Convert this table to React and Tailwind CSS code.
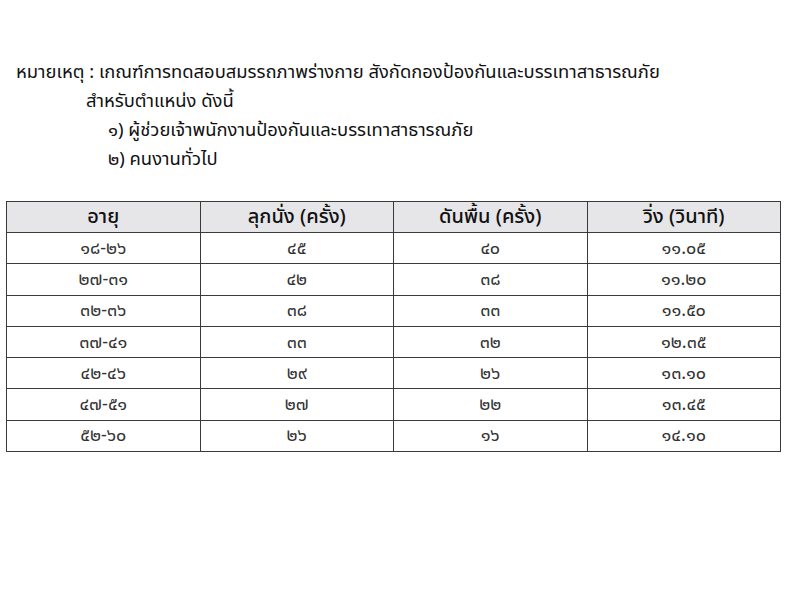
const rows = [
  ["๑๘-๒๖", "๔๕", "๔๐", "๑๑.๐๕"],
  ["๒๗-๓๑", "๔๒", "๓๘", "๑๑.๒๐"],
  ["๓๒-๓๖", "๓๘", "๓๓", "๑๑.๕๐"],
  ["๓๗-๔๑", "๓๓", "๓๒", "๑๒.๓๕"],
  ["๔๒-๔๖", "๒๙", "๒๖", "๑๓.๑๐"],
  ["๔๗-๕๑", "๒๗", "๒๒", "๑๓.๔๕"],
  ["๕๒-๖๐", "๒๖", "๑๖", "๑๔.๑๐"],
];

const headers = ["อายุ", "ลุกนั่ง (ครั้ง)", "ดันพื้น (ครั้ง)", "วิ่ง (วินาที)"];

export default function App() {
  return (
    <div
      className="w-[800px] h-[607px] bg-white text-[#111] overflow-hidden"
      style={{ fontFamily: '"Noto Sans Thai", "Noto Sans", "DejaVu Sans", sans-serif' }}
    >
      <div className="pt-[58px] pl-[16px] text-[18.4px] leading-[29px]">
        <p>หมายเหตุ : เกณฑ์การทดสอบสมรรถภาพร่างกาย สังกัดกองป้องกันและบรรเทาสาธารณภัย</p>
        <p className="pl-[70px]">สำหรับตำแหน่ง ดังนี้</p>
        <p className="pl-[92px]">๑) ผู้ช่วยเจ้าพนักงานป้องกันและบรรเทาสาธารณภัย</p>
        <p className="pl-[92px]">๒) คนงานทั่วไป</p>
      </div>

      <table className="ml-[6px] mt-[27px] w-[775px] border-collapse table-fixed">
        <thead>
          <tr className="bg-[#e6e6e9]">
            {headers.map((h) => (
              <th
                key={h}
                className="h-[31px] border border-[#3a3a3a] text-[20px] font-medium text-[#111] p-0"
              >
                {h}
              </th>
            ))}
          </tr>
        </thead>
        <tbody>
          {rows.map((r) => (
            <tr key={r[0]}>
              {r.map((c, i) => (
                <td
                  key={i}
                  className="h-[31.3px] border border-[#3a3a3a] text-center text-[18px] text-[#333] p-0"
                >
                  {c}
                </td>
              ))}
            </tr>
          ))}
        </tbody>
      </table>
    </div>
  );
}
